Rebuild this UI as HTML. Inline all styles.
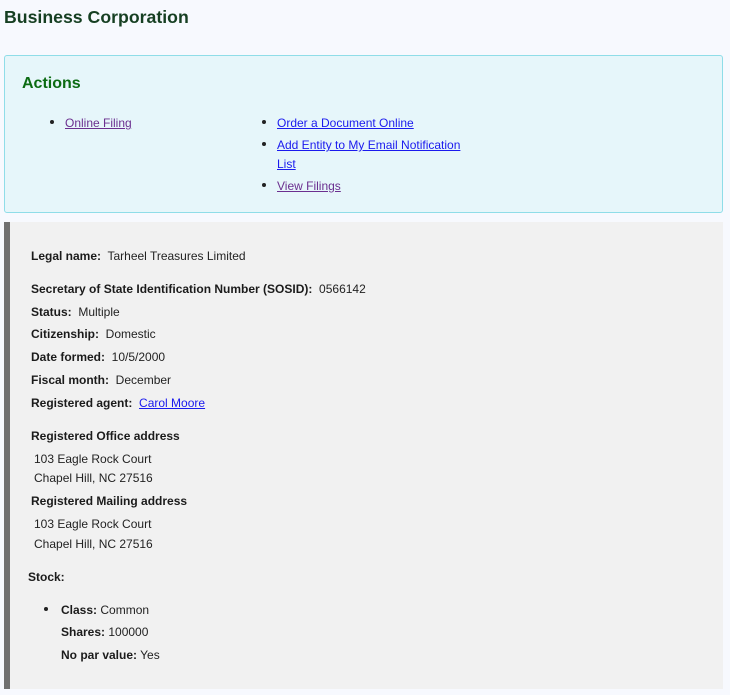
<!DOCTYPE html>
<html><head><style>
body{margin:0;width:730px;height:695px;background:#f7f9fe;font-family:"Liberation Sans",sans-serif;font-size:12px;color:#222;position:relative;overflow:hidden}
.a{position:absolute;white-space:nowrap;line-height:14px}
b{font-weight:bold;color:#1b1b1b}
a{text-decoration:underline}
.v{color:#6b2f8f}.l{color:#1a1aee}
.dot{position:absolute;width:4px;height:4px;border-radius:50%;background:#222}
</style></head><body>
<div class="a" style="left:4px;top:6px;font-size:17.7px;line-height:22px;font-weight:bold;color:#163f22">Business Corporation</div>
<div style="position:absolute;left:4px;top:55px;width:717px;height:156px;background:#e6f6fa;border:1px solid #8fdde8;border-radius:3px"></div>
<div class="a" style="left:22px;top:75px;font-size:16px;line-height:18px;font-weight:bold;color:#0b6b12">Actions</div>
<div class="dot" style="left:50px;top:120px"></div><a class="a v" style="left:65px;top:116px">Online Filing</a>
<div class="dot" style="left:262px;top:120px"></div><a class="a l" style="left:277px;top:116px">Order a Document Online</a>
<div class="dot" style="left:262px;top:142px"></div><a class="a l" style="left:277px;top:138px">Add Entity to My Email Notification</a>
<a class="a l" style="left:277px;top:157px">List</a>
<div class="dot" style="left:262px;top:183px"></div><a class="a v" style="left:277px;top:179px">View Filings</a>
<div style="position:absolute;left:4px;top:222px;width:719px;height:467px;background:#f1f1f1;border-left:6px solid #707070;box-sizing:border-box"></div>
<div class="a" style="left:31px;top:249px"><b>Legal name:</b>&nbsp; Tarheel Treasures Limited</div>
<div class="a" style="left:31px;top:282px"><b>Secretary of State Identification Number (SOSID):</b>&nbsp; 0566142</div>
<div class="a" style="left:31px;top:305px"><b>Status:</b>&nbsp; Multiple</div>
<div class="a" style="left:31px;top:327px"><b>Citizenship:</b>&nbsp; Domestic</div>
<div class="a" style="left:31px;top:350px"><b>Date formed:</b>&nbsp; 10/5/2000</div>
<div class="a" style="left:31px;top:373px"><b>Fiscal month:</b>&nbsp; December</div>
<div class="a" style="left:31px;top:396px"><b>Registered agent:</b>&nbsp; <a class="l">Carol Moore</a></div>
<div class="a" style="left:31px;top:429px"><b>Registered Office address</b></div>
<div class="a" style="left:34px;top:452px">103 Eagle Rock Court</div>
<div class="a" style="left:34px;top:471px">Chapel Hill, NC 27516</div>
<div class="a" style="left:31px;top:494px"><b>Registered Mailing address</b></div>
<div class="a" style="left:34px;top:517px">103 Eagle Rock Court</div>
<div class="a" style="left:34px;top:537px">Chapel Hill, NC 27516</div>
<div class="a" style="left:28px;top:570px"><b>Stock:</b></div>
<div class="dot" style="left:44px;top:607px"></div>
<div class="a" style="left:61px;top:603px"><b>Class:</b> Common</div>
<div class="a" style="left:61px;top:625px"><b>Shares:</b> 100000</div>
<div class="a" style="left:61px;top:648px"><b>No par value:</b> Yes</div>
</body></html>
